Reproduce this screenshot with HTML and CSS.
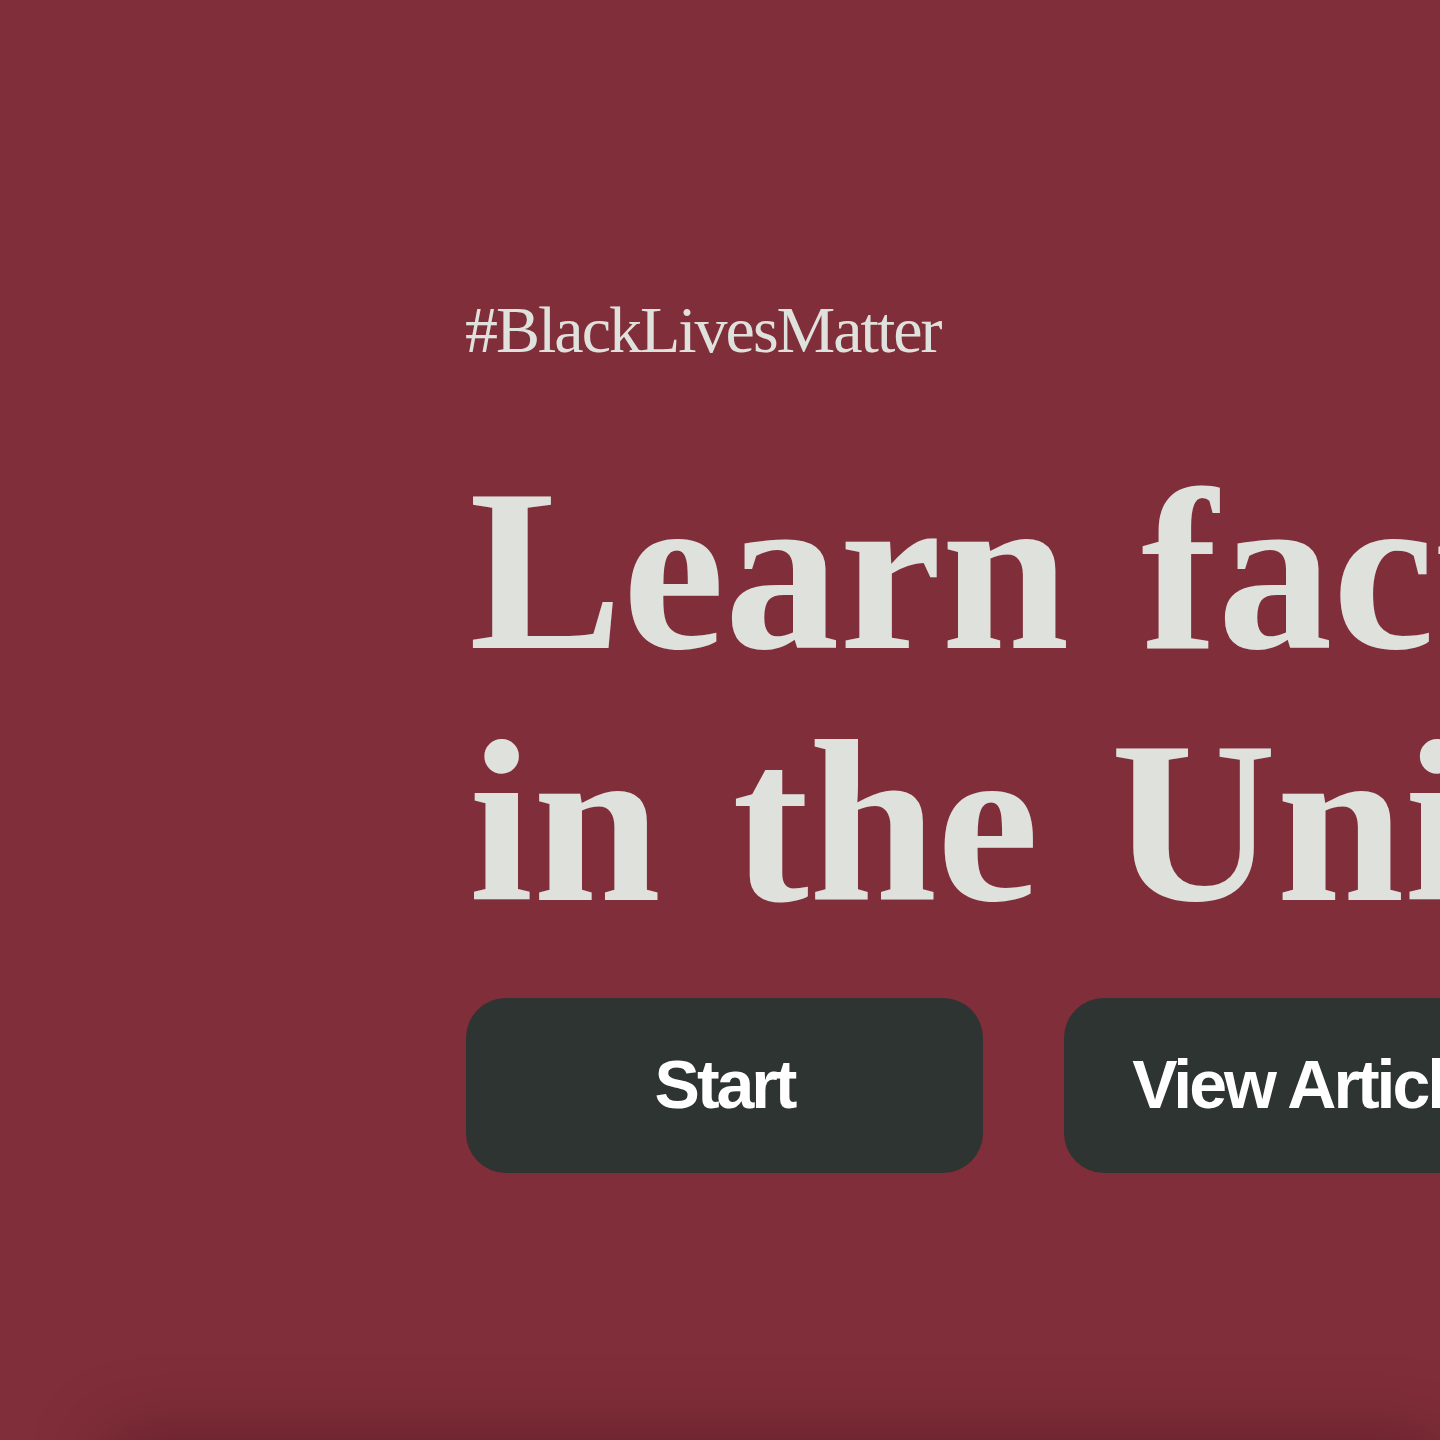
FILE: index.html
```html
<!DOCTYPE html>
<html lang="en">
<head>
<meta charset="utf-8">
<title>Learn facts about racism</title>
<link rel="stylesheet" href="styles.css">
</head>
<body>
<main class="hero">
  <p class="tag">#BlackLivesMatter</p>
  <h1 class="title">Learn facts about racism<br>in the United States</h1>
  <div class="actions">
    <a class="btn" href="#start">Start</a>
    <a class="btn" href="#articles">View Articles</a>
  </div>
</main>
<section class="next"></section>
</body>
</html>
```

FILE: styles.css
```css
html, body {
  margin: 0;
  padding: 0;
  background: #802e39;
  overflow-x: hidden;
}

.hero {
  height: 1440px;
  box-sizing: border-box;
  padding: 290px 0 0 465px;
  overflow: hidden;
  white-space: nowrap;
}

.tag {
  margin: 0;
  font-family: "Liberation Serif", "Times New Roman", serif;
  font-size: 66px;
  line-height: 80px;
  letter-spacing: -2px;
  color: #dfe2dc;
}

.title {
  margin: 75px 0 0 4px;
  font-family: "Liberation Serif", "Times New Roman", serif;
  font-weight: 700;
  font-size: 230px;
  line-height: 252px;
  letter-spacing: 0;
  word-spacing: 14px;
  color: #dfe2dc;
}

.actions {
  display: flex;
  gap: 81px;
  margin-top: 49px;
  margin-left: 1px;
}

.btn {
  flex: none;
  display: flex;
  align-items: center;
  justify-content: center;
  width: 517px;
  height: 175px;
  border-radius: 40px;
  background: #2e3432;
  color: #ffffff;
  text-decoration: none;
  font-family: "Liberation Sans", Arial, sans-serif;
  font-weight: 700;
  font-size: 68px;
  letter-spacing: -3px;
  padding-bottom: 4px;
  box-sizing: border-box;
}

.next {
  height: 400px;
  margin-left: 110px;
  background: #7a2a33;
  box-shadow: 0 0 70px rgba(40, 0, 10, 0.35);
}
```
